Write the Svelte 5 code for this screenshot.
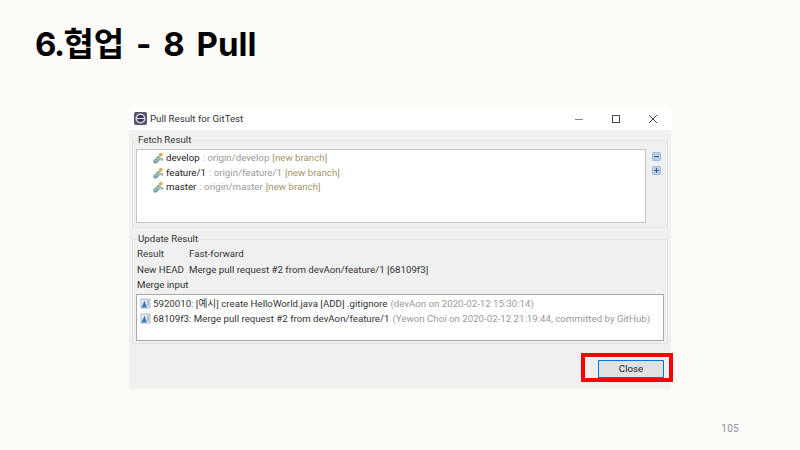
<script lang="ts">
  const branches = [
    { name: 'develop', remote: 'origin/develop' },
    { name: 'feature/1', remote: 'origin/feature/1' },
    { name: 'master', remote: 'origin/master' },
  ]
  const commits = [
    { text: '5920010: [예시] create HelloWorld.java [ADD] .gitignore', meta: '(devAon on 2020-02-12 15:30:14)' },
    { text: '68109f3: Merge pull request #2 from devAon/feature/1', meta: '(Yewon Choi on 2020-02-12 21:19:44, committed by GitHub)' },
  ]
</script>

<div class="slide">
  <h1 class="title"><span class="num">6.</span>협업 - 8 Pull</h1>

  <div class="dialog">
    <div class="titlebar">
      <svg class="app-icon" width="13" height="13" viewBox="0 0 13 13">
        <rect x="0" y="0" width="13" height="13" rx="2" fill="#55556e" />
        <circle cx="6.5" cy="6.5" r="5" fill="#d4d4e0" />
        <circle cx="6.5" cy="6.5" r="3.4" fill="#34345a" />
        <rect x="3" y="6" width="7" height="1" fill="#e8e8f0" />
      </svg>
      <span class="window-title">Pull Result for GitTest</span>
      <div class="controls">
        <svg width="10" height="10" viewBox="0 0 10 10"><path d="M1 5.5h8" stroke="#888" stroke-width="1" /></svg>
        <svg width="10" height="10" viewBox="0 0 10 10"><rect x="1.5" y="1.5" width="7" height="7" fill="none" stroke="#444" /></svg>
        <svg width="10" height="10" viewBox="0 0 10 10"><path d="M1 1l8 8M9 1l-8 8" stroke="#444" stroke-width="1" /></svg>
      </div>
    </div>

    <div class="body">
      <fieldset class="group fetch">
        <legend>Fetch Result</legend>
        <div class="fetch-row">
          <ul class="list branches">
            {#each branches as b}
              <li>
                <svg class="ref-icon" width="12" height="12" viewBox="0 0 12 12">
                  <path d="M1 9l3-3 3 3-2.5 2.5H2z" fill="#6f9fa8" />
                  <path d="M4 5.5l2.5-2 3 3L7 9z" fill="#86ae92" />
                  <path d="M3 9.5l1.5-1.5M6.5 7l1.2-1.2" stroke="#e8f0ee" />
                  <circle cx="8.8" cy="2.8" r="2" fill="#d6b265" />
                  <circle cx="10" cy="7.5" r="1.4" fill="#9fbfb0" />
                </svg>
                <span class="name">{b.name}</span>
                <span class="muted">: {b.remote}</span>
                <span class="tag">[new branch]</span>
              </li>
            {/each}
          </ul>
          <div class="tools">
            <svg width="9" height="9" viewBox="0 0 9 9">
              <rect x=".5" y=".5" width="8" height="8" rx="1" fill="#b9cfe6" stroke="#9dbad8" />
              <path d="M2 4.5h5" stroke="#2f5f92" />
            </svg>
            <svg width="9" height="9" viewBox="0 0 9 9">
              <rect x=".5" y=".5" width="8" height="8" rx="1" fill="#b9cfe6" stroke="#9dbad8" />
              <path d="M2 4.5h5M4.5 2v5" stroke="#2f5f92" />
            </svg>
          </div>
        </div>
      </fieldset>

      <fieldset class="group update">
        <legend>Update Result</legend>
        <div class="info">
          <span>Result</span><span>Fast-forward</span>
          <span>New HEAD</span><span>Merge pull request #2 from devAon/feature/1 [68109f3]</span>
          <span class="wide">Merge input</span>
        </div>
        <ul class="list commits">
          {#each commits as c}
            <li>
              <svg class="commit-icon" width="11" height="11" viewBox="0 0 11 11">
                <rect x="1" y="1" width="9" height="9" fill="#e6eef6" stroke="#a9bdd2" />
                <path d="M1.5 9.5l3-7 2.5 7z" fill="#3f78b0" />
                <path d="M7 3h2M7 5h2M7 7h2" stroke="#7d94ab" />
              </svg>
              <span>{c.text}</span>
              <span class="muted">{c.meta}</span>
            </li>
          {/each}
        </ul>
      </fieldset>

      <div class="footer">
        <div class="highlight">
          <button class="close">Close</button>
        </div>
      </div>
    </div>
  </div>

  <div class="page-no">105</div>
</div>

<style>
  :global(body) {
    margin: 0;
  }

  .slide {
    width: 800px;
    height: 450px;
    overflow: hidden;
    background: #fcfbf7;
    display: flex;
    flex-direction: column;
    font-family: Roboto, 'Noto Sans CJK KR', sans-serif;
  }

  .title {
    margin: 0;
    padding: 21px 0 0 35px;
    height: 107px;
    box-sizing: border-box;
    font: 700 33px/46px Inter, 'Noto Sans CJK KR', sans-serif;
    word-spacing: 4px;
    color: #000;
  }
  .num { letter-spacing: -1.5px; }

  .dialog {
    width: 542px;
    height: 282px;
    margin-left: 129px;
    display: flex;
    flex-direction: column;
    background: #f0f0f0;
    font-size: 9.7px;
    line-height: 14px;
    color: #222;
  }

  .titlebar {
    height: 23px;
    flex: none;
    background: #fff;
    display: flex;
    align-items: center;
    padding-left: 5px;
  }
  .app-icon { margin-right: 3px; }
  .window-title { color: #333; }
  .controls {
    margin-left: auto;
    display: flex;
    gap: 27px;
    padding-right: 13px;
    align-items: center;
  }

  .body {
    flex: 1;
    display: flex;
    flex-direction: column;
    padding: 0 3px;
    min-height: 0;
  }

  .group {
    margin: 0;
    padding: 0;
    box-sizing: border-box;
    border: 1px solid #e2e2e2;
    min-width: 0;
  }
  .group legend {
    margin-left: 4px;
    padding: 0 1px;
    line-height: 14px;
    color: #333;
  }

  .fetch { height: 95px; margin-top: 3px; }
  .fetch-row {
    display: flex;
    padding: 2px 0 0 3px;
  }
  .list {
    list-style: none;
    margin: 0;
    background: #fff;
    box-sizing: border-box;
    border: 1px solid #c4c4c4;
  }
  .branches {
    width: 510px;
    height: 74px;
    padding: 1px 0 0 15px;
  }
  .branches li {
    height: 14.5px;
    display: flex;
    align-items: center;
    gap: 3px;
    white-space: pre;
  }
  .ref-icon { flex: none; margin-right: -1px; }
  .name { color: #222; }
  .muted { color: #9a9a9a; }
  .tag { color: #a8946a; }

  .tools {
    display: flex;
    flex-direction: column;
    gap: 5px;
    padding: 3px 0 0 6px;
  }

  .update { height: 112px; margin-top: 4px; }
  .info {
    display: grid;
    grid-template-columns: 52px 1fr;
    row-gap: 1.5px;
    padding: 1px 0 0 4px;
    line-height: 14px;
    color: #333;
  }
  .info .wide { grid-column: 1 / 3; }

  .commits {
    width: 528px;
    height: 47px;
    margin: 2px 0 0 3px;
    padding: 1px 0 0 3px;
    border-color: #a8a8a8;
  }
  .commits li {
    height: 15px;
    display: flex;
    align-items: center;
    gap: 2px;
    white-space: pre;
    color: #333;
  }
  .commits li .muted { margin-left: 1px; }
  .commit-icon { flex: none; }

  .footer {
    display: flex;
    justify-content: flex-end;
    margin-top: 9px;
  }
  .highlight {
    width: 92px;
    height: 29px;
    margin-right: -5px;
    box-sizing: border-box;
    border: 4px solid #f00;
    display: flex;
    align-items: flex-start;
    padding: 3px 0 0 13px;
  }
  .close {
    width: 66px;
    height: 18px;
    padding: 0;
    box-sizing: border-box;
    background: #e1e1e1;
    border: 1px solid #0078d7;
    box-shadow: inset 0 0 0 1px #cfe3f5;
    font: 9.7px/14px Roboto, sans-serif;
    color: #222;
  }

  .page-no {
    margin: 33px 61px 0 auto;
    font-size: 10px;
    line-height: 14px;
    color: #8c93a6;
    letter-spacing: 0.3px;
  }
</style>
